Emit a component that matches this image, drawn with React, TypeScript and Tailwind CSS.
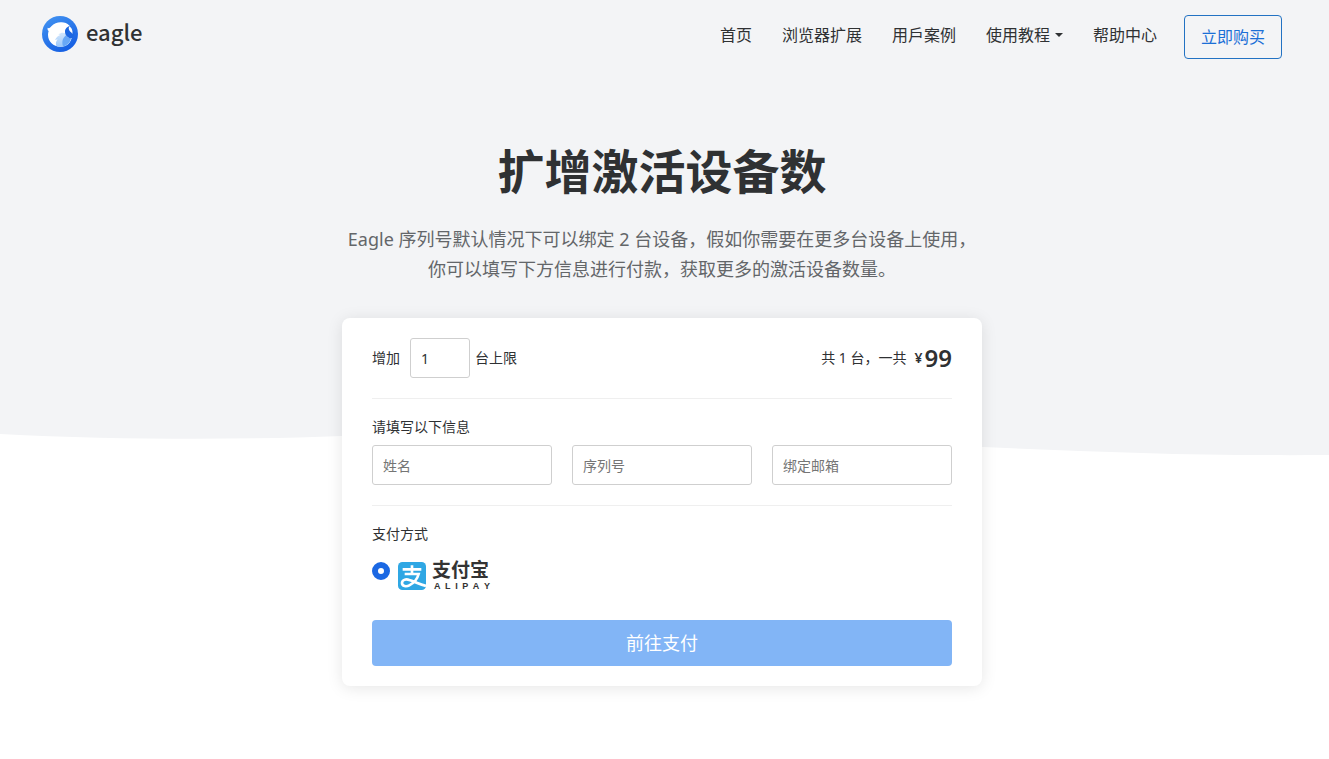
import { useState } from "react";
import type { ReactNode } from "react";

const navItems = [
  { href: "#home", label: "首页" },
  { href: "#extensions", label: "浏览器扩展" },
  { href: "#cases", label: "用戶案例" },
  { href: "#tutorials", label: "使用教程", hasMenu: true },
  { href: "#help", label: "帮助中心" },
];

const fields = [
  { id: "name", label: "姓名", type: "text" },
  { id: "serial", label: "序列号", type: "text" },
  { id: "email", label: "绑定邮箱", type: "email" },
];

const UNIT_PRICE = 99;

function EagleLogo() {
  return (
    <svg viewBox="0 0 108 108" className="h-9 w-9" aria-hidden="true">
      <defs>
        <linearGradient id="ring" x1="0" y1="0" x2="0.6" y2="1">
          <stop offset="0" stopColor="#4596f2" />
          <stop offset="1" stopColor="#1660e3" />
        </linearGradient>
        <linearGradient id="feather" x1="0" y1="0" x2="0" y2="1">
          <stop offset="0" stopColor="#d3e7fd" />
          <stop offset="1" stopColor="#9cc8fa" />
        </linearGradient>
      </defs>
      <circle cx="54" cy="54" r="54" fill="url(#ring)" />
      <path
        d="M17 35c4 3 7 1 11-4 8-9 20-13 31-12 18 0 31 13 32 31 0 3-1 5-2 7l1 4c-2 18-16 31-35 31-21 0-37-16-37-36 0-4 1-8 2-11-3-2-4-6-3-10z"
        fill="#fff"
      />
      <path
        d="M43 90c-3-8-1-14 4-20l-8 2c4-8 9-13 16-15l-6-2c8-5 14-6 21-3 2 8 8 15 17 16-3 16-15 25-32 24-5 0-9-1-12-2z"
        fill="url(#feather)"
      />
      <path d="M63 91c-4-13-2-24 9-33 3 6 8 9 15 9-3 13-11 22-24 24z" fill="#68a8f6" />
      <path
        d="M85 30c-9 1-16 8-16 17 0 10 8 19 19 20 6-3 10-11 9-20-4-2-8-6-12-17z"
        fill="#1c67e2"
      />
      <path d="M82 31c-3 5-2 10 1 14 3 3 6 5 8 9 2-9-1-17-9-23z" fill="#fff" />
    </svg>
  );
}

function AlipayLogo() {
  return (
    <span className="flex">
      <svg viewBox="0 0 84 84" className="h-7 w-7" aria-hidden="true">
        <rect width="84" height="84" rx="13" fill="#2fa7e4" />
        <g fill="none" stroke="#fff" strokeWidth="8">
          <path d="M14 22h56M42 10v26" />
          <path d="M20 36h42C58 51 46 64 34 70c-9 5-22 3-22-7 0-9 11-13 22-9 17 5 29 12 50 18" />
        </g>
      </svg>
      <span className="ml-1.5 flex w-[60px] flex-col gap-1 text-[#333]">
        <span className="text-[19px]/4 font-bold">支付宝</span>
        <span
          aria-label="ALIPAY"
          className="flex justify-between px-0.5 font-['Liberation_Sans',sans-serif] text-[9px]/2 font-bold"
        >
          {["A", "L", "I", "P", "A", "Y"].map((letter, i) => (
            <span key={i}>{letter}</span>
          ))}
        </span>
      </span>
    </span>
  );
}

function Header() {
  return (
    <header className="mx-auto flex max-w-[1240px] items-start justify-between pt-[15px]">
      <a href="#home" className="flex h-[38px] items-center gap-2">
        <EagleLogo />
        <span className="pb-1.5 font-['Noto_Sans_CJK_SC',sans-serif] text-[22px]/8 font-medium">eagle</span>
      </a>
      <nav className="flex items-start gap-[30px] text-base/10">
        {navItems.map((item) => (
          <a key={item.href} href={item.href} className="flex items-center hover:text-[#1b6fd6]">
            {item.label}
            {item.hasMenu && (
              <svg viewBox="0 0 8 4" className="ml-[5px] h-1 w-2" fill="currentColor" aria-hidden="true">
                <path d="M0 0h8L4 4z" />
              </svg>
            )}
          </a>
        ))}
        <a
          href="#buy"
          className="-ml-[3px] rounded border border-[#2272c3] px-4 leading-[42px] text-[#1b6fd6] hover:bg-white"
        >
          立即购买
        </a>
      </nav>
    </header>
  );
}

function Section({ title, children }: { title: string; children: ReactNode }) {
  return (
    <section className="pt-[18px]">
      <h2 className="text-sm/5">{title}</h2>
      {children}
    </section>
  );
}

const inputClass =
  "h-10 rounded-[3px] border border-[#cfcfcf] bg-white px-2.5 text-sm outline-none placeholder:text-[#757575] focus:border-[#1b6fd6]";

function OrderForm() {
  const [count, setCount] = useState("1");
  const total = (Number(count) || 0) * UNIT_PRICE;

  return (
    <form
      onSubmit={(e) => e.preventDefault()}
      className="relative mx-auto w-full max-w-[640px] rounded-lg bg-white px-[30px] py-5 shadow-[0_2px_16px_rgba(0,0,0,0.1)]"
    >
      <div className="flex items-center justify-between border-b border-[#efefef] pb-5 text-sm">
        <div className="flex items-center">
          <label htmlFor="count">增加</label>
          <input
            id="count"
            inputMode="numeric"
            value={count}
            onChange={(e) => setCount(e.target.value)}
            className={`${inputClass} mr-[5px] ml-2.5 w-[60px]`}
          />
          <span>台上限</span>
        </div>
        <div className="flex items-center">
          <span>共 {count} 台，一共</span>
          <span className="ml-2 font-semibold">¥</span>
          <span className="ml-0.5 text-2xl/8 font-semibold">{total}</span>
        </div>
      </div>

      <Section title="请填写以下信息">
        <div className="mt-2 grid grid-cols-3 gap-5 border-b border-[#efefef] pb-5">
          {fields.map((field) => (
            <input
              key={field.id}
              id={field.id}
              type={field.type}
              aria-label={field.label}
              placeholder={field.label}
              className={`${inputClass} w-full`}
            />
          ))}
        </div>
      </Section>

      <Section title="支付方式">
        <label className="mt-[18px] flex w-fit items-start">
          <input
            type="radio"
            name="payment"
            defaultChecked
            aria-label="支付宝"
            className="mr-2 h-[18px] w-[18px] appearance-none rounded-full border border-[#cfcfcf] bg-white checked:border-6 checked:border-[#1b68e3]"
          />
          <AlipayLogo />
        </label>
      </Section>

      <button
        type="submit"
        className="mt-[30px] h-[46px] w-full rounded bg-[#82b5f6] text-lg text-white hover:bg-[#6ba6f3]"
      >
        前往支付
      </button>
    </form>
  );
}

export default function App() {
  return (
    <div className="min-h-screen bg-white pb-[73px] font-['Noto_Sans','Noto_Sans_CJK_SC',sans-serif] text-[#2f3133]">
      <div className="bg-[#f3f4f6] pr-[47px] pb-[148px] pl-[42px]">
        <Header />
        <div className="mt-[76px] text-center">
          <h1 className="text-[47px]/[72px] font-bold">扩增激活设备数</h1>
          <p className="mt-[17px] text-lg/[30px] text-[#636669]">
            Eagle 序列号默认情况下可以绑定 2 台设备，假如你需要在更多台设备上使用，
            <br />
            你可以填写下方信息进行付款，获取更多的激活设备数量。
          </p>
        </div>
      </div>
      <svg
        viewBox="0 0 1329 24"
        preserveAspectRatio="none"
        className="block h-6 w-full"
        fill="#f3f4f6"
        aria-hidden="true"
      >
        <path d="M0 0H1329V23C1200 24 1100 20 983 15C780 6 600 0 342 4C240 8 120 8 0 2Z" />
      </svg>
      <main className="-mt-[138px] pr-[5px]">
        <OrderForm />
      </main>
    </div>
  );
}
